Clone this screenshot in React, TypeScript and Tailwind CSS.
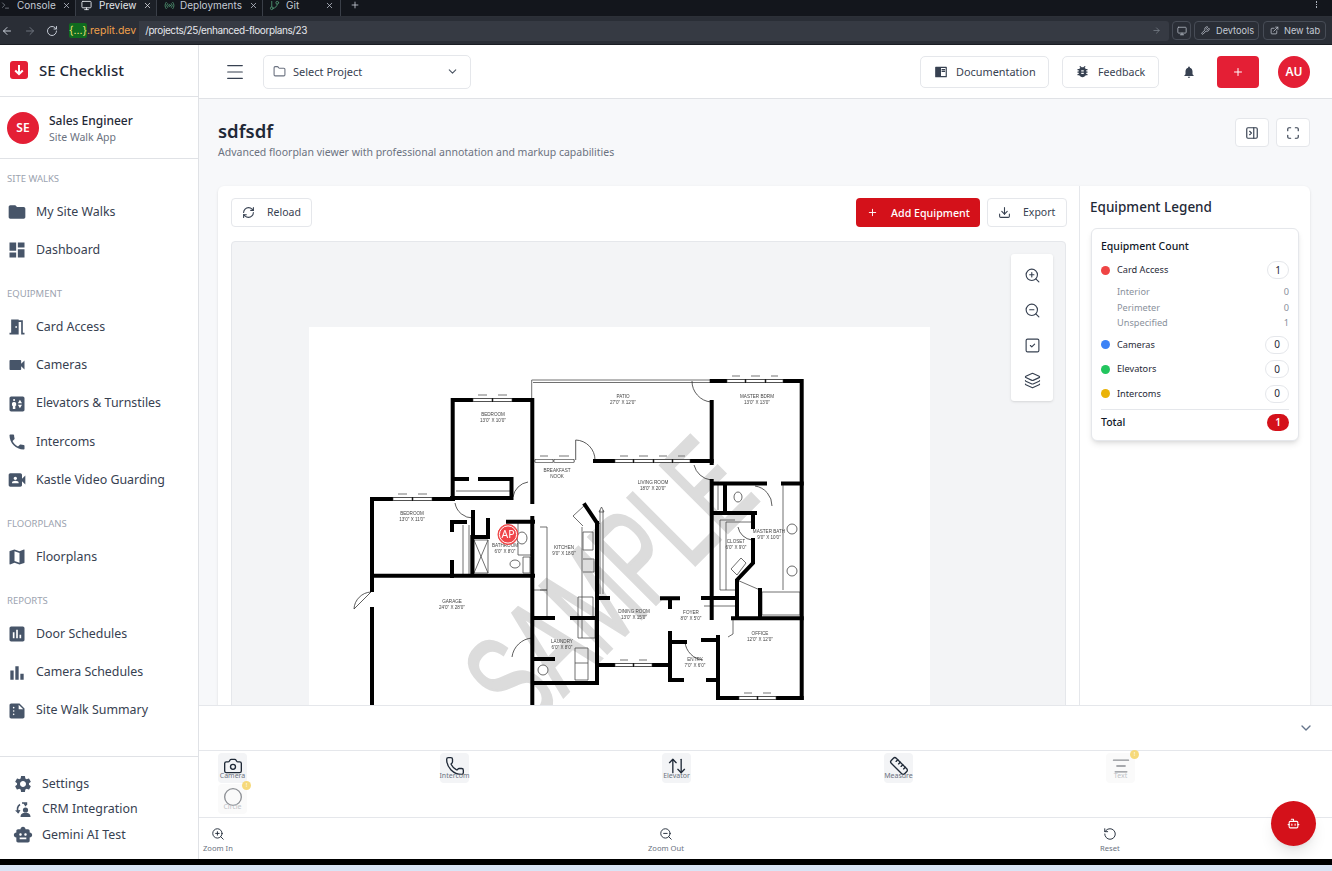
import React from "react";
import {
  AlignCenter,
  ArrowLeft,
  ArrowRight,
  ArrowUpDown,
  Bot,
  Camera,
  ChevronDown,
  Circle,
  Download,
  ExternalLink,
  Folder,
  GitBranch,
  Layers,
  Maximize,
  Menu,
  Monitor,
  PanelRightClose,
  Phone,
  Plus,
  Radio,
  RefreshCw,
  RotateCcw,
  RotateCw,
  Ruler,
  SquareCheck,
  Terminal,
  Wrench,
  X,
  ZoomIn,
  ZoomOut,
} from "lucide-react";
import {
  MdAssessment,
  MdBarChart,
  MdBugReport,
  MdDashboard,
  MdElevator,
  MdFolder,
  MdMap,
  MdMeetingRoom,
  MdNotifications,
  MdPhone,
  MdSettings,
  MdSmartToy,
  MdSummarize,
  MdVideoCameraFront,
  MdVideocam,
} from "react-icons/md";
import { RiBookReadFill } from "react-icons/ri";

function CrmIcon() {
  return (
    <svg width="20" height="18" viewBox="0 0 20 18" fill="none">
      <path d="M7 3.5C4.5 5 3.5 8.5 5.5 12" stroke="#475569" strokeWidth="1.6" />
      <path d="M2 9.5l3.5 3 2-3.5" fill="#475569" />
      <path d="M9 2h4.5v2M13 5l-2-3" stroke="#475569" strokeWidth="1.4" />
      <circle cx="12.5" cy="9" r="2.6" fill="#475569" />
      <path d="M7.5 16c0-3 2.2-4.3 5-4.3s5 1.3 5 4.3z" fill="#475569" />
    </svg>
  );
}

const navSections = [
  {
    title: "SITE WALKS",
    items: [
      ["My Site Walks", MdFolder],
      ["Dashboard", MdDashboard],
    ],
  },
  {
    title: "EQUIPMENT",
    items: [
      ["Card Access", MdMeetingRoom],
      ["Cameras", MdVideocam],
      ["Elevators & Turnstiles", MdElevator],
      ["Intercoms", MdPhone],
      ["Kastle Video Guarding", MdVideoCameraFront],
    ],
  },
  {
    title: "FLOORPLANS",
    items: [["Floorplans", MdMap]],
  },
  {
    title: "REPORTS",
    items: [
      ["Door Schedules", MdAssessment],
      ["Camera Schedules", MdBarChart],
      ["Site Walk Summary", MdSummarize],
    ],
  },
] as const;

function BrowserBar() {
  return (
    <div className="font-['Inter',sans-serif]">
      <div className="flex h-[17px] items-center overflow-hidden border-b border-[#2c3037] bg-[#13161c] text-[10px] text-[#c4cad4]">
        <div className="flex h-full w-[76px] items-center border-r border-[#3a3f48] pb-[6px] pl-[1px]">
          <Terminal size={9} className="text-[#8b919b]" />
          <span className="ml-[7px]">Console</span>
          <X size={9} className="ml-auto mr-[4px]" />
        </div>
        <div className="flex h-full w-[81px] items-center border-r border-[#3a3f48] bg-[#1c2027] pb-[6px] pl-[5px] text-[#e5e7eb]">
          <Monitor size={11} />
          <span className="ml-[7px]">Preview</span>
          <X size={9} className="ml-auto mr-[4px]" />
        </div>
        <div className="flex h-full w-[106px] items-center border-r border-[#3a3f48] pb-[6px] pl-[7px]">
          <Radio size={11} className="text-[#4d8f6f]" />
          <span className="ml-[5px]">Deployments</span>
          <X size={9} className="ml-auto mr-[4px]" />
        </div>
        <div className="flex h-full w-[78px] items-center border-r border-[#3a3f48] pb-[6px] pl-[6px]">
          <GitBranch size={11} className="text-[#4d8f6f]" />
          <span className="ml-[6px]">Git</span>
          <X size={9} className="ml-auto mr-[6px]" />
        </div>
        <Plus size={10} className="mb-[6px] ml-[9px]" />
        <div className="mb-[7px] ml-auto mr-[15px] flex flex-col gap-[1px]">
          <span className="h-[1.5px] w-[1.5px] bg-[#aeb4be]" />
          <span className="h-[1.5px] w-[1.5px] bg-[#aeb4be]" />
          <span className="h-[1.5px] w-[1.5px] bg-[#aeb4be]" />
        </div>
      </div>
      <div className="flex h-[27px] items-center bg-[#2a2e36] text-[10px]">
        <ArrowLeft size={12} className="ml-[1px] text-[#c4cad4]" />
        <ArrowRight size={12} className="ml-[11px] text-[#6d737d]" />
        <RotateCw size={12} className="ml-[10px] text-[#c4cad4]" />
        <div className="ml-[6px] flex h-[20px] flex-1 items-center rounded-[3px] bg-[#363a43]">
          <div className="flex h-full items-center bg-[#2a2e36] pl-[5px] pr-[3px] text-[10.5px]">
            <span className="rounded-[2px] bg-[#0f6b1f] text-[#f3e27a]">{"{...}"}</span>
            <span className="text-[#f0a04b]">.replit.dev</span>
          </div>
          <span className="ml-[6px] tracking-[-0.4px] text-[#e5e7eb]">/projects/25/enhanced-floorplans/23</span>
          <ArrowRight size={9} className="ml-auto mr-[8px] text-[#7b818b]" />
        </div>
        <div className="ml-[3px] flex h-[19px] w-[19px] items-center justify-center rounded-[4px] border border-[#474c56]">
          <Monitor size={10} className="text-[#aeb4be]" />
        </div>
        <div className="ml-[3px] flex h-[19px] w-[65px] items-center rounded-[4px] border border-[#474c56] pl-[6px] text-[9.2px] text-[#c4cad4]">
          <Wrench size={9} />
          <span className="ml-[6px]">Devtools</span>
        </div>
        <div className="ml-[4px] mr-[6px] flex h-[19px] w-[63px] items-center rounded-[4px] border border-[#474c56] pl-[6px] text-[9.2px] text-[#c4cad4]">
          <ExternalLink size={9} />
          <span className="ml-[5px]">New tab</span>
        </div>
      </div>
    </div>
  );
}

function Sidebar() {
  return (
    <aside className="flex w-[199px] shrink-0 flex-col border-r border-[#e0e2e6] bg-white">
      <div className="flex h-[52px] shrink-0 items-center border-b border-[#e0e2e6] pb-[1px] pl-[10px]">
        <div className="flex h-[18px] w-[18px] items-center justify-center rounded-[3px] bg-[#e41f35]">
          <svg width="12" height="12" viewBox="0 0 12 12" fill="none" stroke="white" strokeWidth="2">
            <path d="M6 1v9M2.2 6.4 6 10l3.8-3.6" />
          </svg>
        </div>
        <span className="ml-[11px] text-[15px] font-medium text-[#1f2937]">SE Checklist</span>
      </div>
      <div className="flex h-[62px] shrink-0 items-center border-b border-[#e0e2e6] pl-[7px] pt-[1px]">
        <div className="flex h-[32px] w-[32px] items-center justify-center rounded-full bg-[#e41f35] text-[12px] font-semibold text-white">
          SE
        </div>
        <div className="ml-[10px]">
          <div className="text-[12px] font-medium leading-[17px] text-[#1f2937]">Sales Engineer</div>
          <div className="text-[10.5px] leading-[16px] text-[#6b7280]">Site Walk App</div>
        </div>
      </div>
      <nav className="flex-1 pt-[12.8px]">
        {navSections.map((section) => (
          <div key={section.title} className="mb-[18px]">
            <div className="mb-[7px] h-[14px] pl-[7px] text-[9.5px] leading-[14px] text-[#9ca3af]">
              {section.title}
            </div>
            {section.items.map(([label, Icon]) => (
              <div key={label} className="flex h-[38.2px] items-center pl-[7px]">
                <Icon size={20} className="text-[#475569]" />
                <span className="ml-[9px] text-[12.4px] text-[#374151]">{label}</span>
              </div>
            ))}
          </div>
        ))}
      </nav>
      <div className="flex h-[103px] shrink-0 flex-col gap-[7.6px] border-t border-[#e0e2e6] pl-[13px] pt-[18px] text-[12.4px] text-[#374151]">
        <div className="flex h-[18px] items-center">
          <MdSettings size={20} className="text-[#475569]" />
          <span className="ml-[9px]">Settings</span>
        </div>
        <div className="flex h-[18px] items-center">
          <CrmIcon />
          <span className="ml-[9px]">CRM Integration</span>
        </div>
        <div className="flex h-[18px] items-center">
          <MdSmartToy size={20} className="text-[#475569]" />
          <span className="ml-[9px]">Gemini AI Test</span>
        </div>
      </div>
    </aside>
  );
}

function TopBar() {
  return (
    <header className="flex h-[54px] shrink-0 items-center border-b border-[#e0e2e6] bg-white pl-[25px] pr-[22px]">
      <Menu size={22} strokeWidth={1.2} className="text-[#374151]" />
      <div className="ml-[17px] flex h-[34px] w-[208px] items-center rounded-[5px] border border-[#e5e7eb] pl-[9px] pr-[11px] text-[11px] text-[#374151]">
        <Folder size={13} className="text-[#6b7280]" />
        <span className="ml-[7px] pt-[1px]">Select Project</span>
        <ChevronDown size={13} className="ml-auto text-[#4b5563]" />
      </div>
      <div className="ml-auto flex h-[32px] w-[129px] items-center rounded-[5px] border border-[#e5e7eb] pl-[13px] text-[10.9px] text-[#374151]">
        <RiBookReadFill size={14} className="text-[#374151]" />
        <span className="ml-[8px] pt-[1px]">Documentation</span>
      </div>
      <div className="ml-[13px] flex h-[32px] w-[97px] items-center rounded-[5px] border border-[#e5e7eb] pl-[12px] text-[10.6px] text-[#374151]">
        <MdBugReport size={15} className="text-[#374151]" />
        <span className="ml-[8px] pt-[2px]">Feedback</span>
      </div>
      <MdNotifications size={14} className="ml-[23px] text-[#374151]" />
      <div className="ml-[21px] flex h-[32px] w-[42px] items-center justify-center rounded-[4px] bg-[#e41f35]">
        <Plus size={12} strokeWidth={2} className="text-white" />
      </div>
      <div className="ml-[19px] flex h-[32px] w-[32px] items-center justify-center rounded-full bg-[#e41f35] text-[12px] font-semibold text-white">
        AU
      </div>
    </header>
  );
}

const thickWalls = [
  "M452.7 400H532.3M452.7 400V498M532.3 400V502",
  "M453 479H467M480 479H511.5V498M452 498H511.5",
  "M372 499H453M372 499V590M372 609V705M372 575.7H533",
  "M452 522V530M452 562V576M452 522H465M508 521.7H533M473 512V537M488 520V537M473 537H488M472.3 537V575",
  "M532.3 518V705M533 618H553M533 659H553M533 683H597",
  "M595 461H711.7",
  "M711.7 381H801.7M801.7 381V698M711.7 402V463",
  "M711.7 483.5H765M783 483.5H801.7M725 484V510M711.7 513H755M711.7 481V618",
  "M753 513V527M753 540V563L737 580V618M760 590V618M733 618.3H801.7",
  "M703 598H737M718 637V698H801.7",
  "M670 633V680M670 642H685M703 640H718M670 680H682M708 680H718",
  "M598 665H670M670 600V607M662 598.3H678M598 598H608M597 523V683",
  "M597 523L585 505M572 618H595",
];

const thinLines = [
  "M531.7 461V380H711.7",
  "M533 382.5H710",
  "M533 461H575",
  "M456 491H510",
  "M463 525V576M469 525V576",
  "M474 540H488V573H474ZM474 540L488 573M488 540L474 573",
  "M518 523V555H533M523 557H530V573H523Z",
  "M540 527H547V590H540M534 590H547V617H534",
  "M718 485V510",
  "M720 520H735M720 520V590H735",
  "M737 580L760 590",
  "M762 592H800V615H762Z",
  "M600 510V594M603 510V594M601.5 507L599 512H604Z",
  "M585 505L573 516L583 526M582 527V638",
  "M583 532H593V550H583ZM583 559H594V572H583",
  "M578 597H593V617H578ZM578 618H595V638H578Z",
  "M575 648H588V680H575ZM575 663H588",
  "M704 606H737",
  "M726 522H752M726 522V590",
  "M733 618V634L728 637",
  "M746 563L737 575L731 569L741 558Z",
  "M783 484V590",
];

const doorArcs = [
  "M354 609L371 592M354 609A18 18 0 0 1 371 592",
  "M455 503A18 18 0 0 0 473 518",
  "M513 497A18 18 0 0 1 528 482",
  "M512 657A22 22 0 0 1 532 638",
  "M575.7 460V440A20 20 0 0 1 595 460",
  "M692 381A21 21 0 0 0 711 402",
  "M694 465A20 20 0 0 0 711 480",
  "M755 486A20 20 0 0 1 772 506",
  "M738 527A16 16 0 0 0 752 540",
  "M685 642A20 20 0 0 0 703 660",
];

const roomLabels: [string, string, number, number][] = [
  ["BEDROOM", "13'0\" X 10'0\"", 493, 416],
  ["BEDROOM", "13'0\" X 11'0\"", 412, 515],
  ["BATHROOM", "6'0\" X 8'0\"", 505, 547],
  ["GARAGE", "24'0\" X 28'0\"", 452, 603],
  ["KITCHEN", "9'0\" X 18'0\"", 564, 549],
  ["LAUNDRY", "6'0\" X 8'0\"", 562, 643],
  ["BREAKFAST", "NOOK", 557, 472],
  ["PATIO", "27'0\" X 12'0\"", 623, 398],
  ["MASTER BDRM", "13'0\" X 13'0\"", 757, 398],
  ["LIVING ROOM", "18'0\" X 20'0\"", 653, 484],
  ["MASTER BATH", "9'0\" X 10'0\"", 769, 533],
  ["CLOSET", "6'0\" X 9'0\"", 736, 543],
  ["DINING ROOM", "13'0\" X 15'0\"", 634, 613],
  ["FOYER", "8'0\" X 5'0\"", 691, 614],
  ["ENTRY", "7'0\" X 6'0\"", 695, 661],
  ["OFFICE", "12'0\" X 12'0\"", 760, 635],
];

const windows = [
  [473, 492, 398.5],
  [493, 512, 398.5],
  [393, 412, 497.5],
  [413, 432, 497.5],
  [727, 745, 379.5],
  [746, 765, 379.5],
  [766, 783, 379.5],
  [535, 553, 459.5],
  [554, 574, 459.5],
  [615, 633, 459.5],
  [634, 653, 459.5],
  [654, 672, 459.5],
  [673, 690, 459.5],
  [615, 633, 663.5],
  [634, 652, 663.5],
  [739, 757, 696.5],
  [758, 776, 696.5],
];

function FloorplanDrawing() {
  return (
    <svg viewBox="309 327 621 378" width="621" height="378" className="block bg-white" style={{ filter: "blur(0.35px)" }}>
      <text
        transform="translate(524 736) rotate(-45) scale(0.6 1)"
        fontFamily="Liberation Sans, sans-serif"
        fontSize="138"
        fill="#dcdcdc"
        stroke="#dcdcdc"
        strokeWidth="3"
      >
        SAMPLE
      </text>
      {thinLines.map((d) => (
        <path key={d} d={d} fill="none" stroke="#4b4b4b" strokeWidth="0.8" />
      ))}
      {doorArcs.map((d) => (
        <path key={d} d={d} fill="none" stroke="#333" strokeWidth="0.8" />
      ))}
      {thickWalls.map((d) => (
        <path key={d} d={d} fill="none" stroke="#000" strokeWidth="4" strokeLinecap="square" />
      ))}
      {windows.map(([x1, x2, y]) => (
        <g key={`${x1}-${y}`}>
          <rect x={x1} y={y} width={x2 - x1} height="3" fill="white" stroke="#333" strokeWidth="0.6" />
          <rect x={x1 + 5} y={y - 4} width={x2 - x1 - 10} height="1" fill="#777" />
        </g>
      ))}
      <ellipse cx="515" cy="564" rx="5" ry="4" fill="white" stroke="#444" strokeWidth="0.8" />
      <ellipse cx="522" cy="538" rx="5" ry="6" fill="white" stroke="#444" strokeWidth="0.8" />
      <circle cx="543" cy="670" r="5" fill="white" stroke="#444" strokeWidth="0.8" />
      <circle cx="792" cy="529" r="5" fill="white" stroke="#444" strokeWidth="0.8" />
      <circle cx="792" cy="571" r="5" fill="white" stroke="#444" strokeWidth="0.8" />
      <ellipse cx="738" cy="497" rx="4" ry="5" fill="white" stroke="#444" strokeWidth="0.8" />
      {roomLabels.map(([name, size, x, y]) => (
        <text key={`${name}-${x}`} x={x} y={y} textAnchor="middle" fontFamily="Liberation Sans, sans-serif" fontSize="4.6" fill="#444">
          {name}
          <tspan x={x} dy="6">
            {size}
          </tspan>
        </text>
      ))}
      <circle cx="508" cy="534.5" r="10" fill="#ef4444" stroke="#ef4444" strokeWidth="1" />
      <circle cx="508" cy="534.5" r="8.6" fill="#f0454a" stroke="#ffffff" strokeWidth="1" />
      <text x="508" y="538.2" textAnchor="middle" fontFamily="Noto Sans, sans-serif" fontSize="10.5" fill="white">
        AP
      </text>
    </svg>
  );
}

const legendRows = [
  ["Cameras", "bg-[#3b82f6]"],
  ["Elevators", "bg-[#22c55e]"],
  ["Intercoms", "bg-[#eab308]"],
];

function Legend() {
  return (
    <div className="w-[231px] shrink-0 border-l border-[#e5e7eb] pl-[10px] pr-[10px] pt-[13px]">
      <div className="text-[13.5px] font-medium leading-[17px] text-[#1f2937]">Equipment Legend</div>
      <div className="ml-[1px] mt-[12px] h-[213px] w-[208px] rounded-[6px] border border-[#e5e7eb] bg-white pl-[9px] pr-[9px] pt-[10px] shadow-md">
        <div className="text-[10.5px] font-medium leading-[15px] text-[#111827]">Equipment Count</div>
        <div className="mt-[7px] flex h-[18px] items-center text-[9.2px] text-[#1f2937]">
          <span className="h-[9px] w-[9px] rounded-full bg-[#ef4444]" />
          <span className="ml-[7px]">Card Access</span>
          <span className="ml-auto flex h-[18px] w-[22px] items-center justify-center rounded-full border border-[#e5e7eb] text-[10px]">1</span>
        </div>
        <div className="mt-[5px] pl-[16px] text-[9.2px] leading-[15.5px] text-[#8a919c]">
          <div className="flex justify-between"><span>Interior</span><span>0</span></div>
          <div className="flex justify-between"><span>Perimeter</span><span>0</span></div>
          <div className="flex justify-between"><span>Unspecified</span><span>1</span></div>
        </div>
        <div className="mt-[5px] flex flex-col gap-[6.5px]">
          {legendRows.map(([label, dot]) => (
            <div key={label} className="flex h-[18px] items-center text-[9.2px] text-[#1f2937]">
              <span className={`h-[9px] w-[9px] rounded-full ${dot}`} />
              <span className="ml-[7px]">{label}</span>
              <span className="ml-auto flex h-[18px] w-[24px] items-center justify-center rounded-full border border-[#e5e7eb] text-[10px]">0</span>
            </div>
          ))}
        </div>
        <div className="mt-[6.5px] flex h-[26px] items-center border-t border-[#e5e7eb] text-[10.5px] font-medium text-[#111827]">
          <span>Total</span>
          <span className="ml-auto flex h-[17px] w-[22px] items-center justify-center rounded-full bg-[#d4111a] text-[10px] font-semibold text-white">1</span>
        </div>
      </div>
    </div>
  );
}

const toolButtons = [
  ["Camera", Camera, false],
  ["Intercom", Phone, false],
  ["Elevator", ArrowUpDown, false],
  ["Measure", Ruler, false],
  ["Text", AlignCenter, true],
  ["Circle", Circle, true],
] as const;

function Tools() {
  return (
    <div className="grid h-[67px] shrink-0 grid-cols-[222px_222px_222px_222px_1fr] content-start gap-y-[1px] border-b border-[#e5e7eb] pl-[19px] pt-[2px]">
      {toolButtons.map(([label, Icon, soon]) => (
        <div
          key={label}
          className={`relative flex h-[30px] w-[29px] flex-col items-center rounded-[4px] pt-[3px] ${soon ? "bg-[#fafafa]" : "bg-[#f3f4f6]"}`}
        >
          <Icon size={20} strokeWidth={1.6} className={soon ? "text-[#8c8f94]" : "text-[#1f2937]"} />
          <span className={`-mt-[5px] text-[7px] leading-[9px] ${soon ? "text-[#c0c2c6]" : "text-[#6b7280]"}`}>{label}</span>
          {soon && (
            <span className="absolute -right-[4px] -top-[3px] flex h-[9px] w-[9px] items-center justify-center rounded-full bg-[#f6d97a] text-[6px] text-white">
              !
            </span>
          )}
        </div>
      ))}
    </div>
  );
}

function ZoomBar() {
  const items = [
    ["Zoom In", ZoomIn],
    ["Zoom Out", ZoomOut],
    ["Reset", RotateCcw],
  ] as const;
  return (
    <div className="grid h-[41px] shrink-0 grid-cols-[445px_452px_1fr] pl-[4px] pt-[9px]">
      {items.map(([label, Icon]) => (
        <div key={label} className="flex w-fit flex-col items-center">
          <Icon size={14} strokeWidth={1.6} className="text-[#1f2937]" />
          <span className="mt-[2px] text-[7.6px] leading-[11px] text-[#6b7280]">{label}</span>
        </div>
      ))}
    </div>
  );
}

function Workspace() {
  return (
    <div className="min-h-0 flex-1 overflow-hidden bg-[#f7f8fa] pl-[19px] pr-[22px]">
      <div className="flex h-[87px] items-start justify-between pt-[19px]">
        <div className="pt-[1px]">
          <h1 className="text-[18.5px] font-semibold leading-[24px] text-[#1f2937]">sdfsdf</h1>
          <p className="mt-[1px] text-[10.5px] leading-[16px] text-[#6b7280]">
            Advanced floorplan viewer with professional annotation and markup capabilities
          </p>
        </div>
        <div className="flex gap-[7px]">
          <div className="flex h-[29px] w-[34px] items-center justify-center rounded-[4px] border border-[#e5e7eb] bg-white">
            <PanelRightClose size={14} className="text-[#374151]" />
          </div>
          <div className="flex h-[29px] w-[34px] items-center justify-center rounded-[4px] border border-[#e5e7eb] bg-white">
            <Maximize size={14} className="text-[#374151]" />
          </div>
        </div>
      </div>
      <div className="flex h-[560px] rounded-[6px] bg-white shadow-sm">
        <div className="min-w-0 flex-1 pl-[13px] pr-[12px] pt-[12px]">
          <div className="flex h-[29px] items-center">
            <div className="flex h-full w-[81px] items-center rounded-[4px] border border-[#e5e7eb] pl-[10px] text-[10.5px] text-[#374151]">
              <RefreshCw size={13} />
              <span className="ml-[12px] pt-[1px]">Reload</span>
            </div>
            <div className="ml-auto flex h-full w-[124px] items-center rounded-[4px] bg-[#d4111a] pl-[11px] text-[10.7px] font-medium text-white">
              <Plus size={11} />
              <span className="ml-[13px] pt-[1px]">Add Equipment</span>
            </div>
            <div className="ml-[7px] flex h-full w-[80px] items-center rounded-[4px] border border-[#e5e7eb] pl-[10px] text-[10.5px] text-[#374151]">
              <Download size={13} />
              <span className="ml-[12px] pt-[1px]">Export</span>
            </div>
          </div>
          <div className="relative mt-[14px] h-[600px] w-[835px] rounded-[4px] border border-[#e5e7eb] bg-[#f3f4f6] pl-[77px] pt-[85px]">
            <FloorplanDrawing />
            <div className="absolute right-[12px] top-[12px] flex h-[147px] w-[42px] flex-col items-center gap-[18px] rounded-[3px] bg-white pt-[13px] shadow-sm">
              <ZoomIn size={17} strokeWidth={1.6} className="text-[#374151]" />
              <ZoomOut size={17} strokeWidth={1.6} className="text-[#374151]" />
              <SquareCheck size={17} strokeWidth={1.6} className="text-[#374151]" />
              <Layers size={17} strokeWidth={1.6} className="text-[#374151]" />
            </div>
          </div>
        </div>
        <Legend />
      </div>
    </div>
  );
}

export default function App() {
  return (
    <div className="relative flex h-[871px] w-[1332px] flex-col overflow-hidden bg-[#d9e4f5] font-['Noto_Sans',sans-serif]">
      <BrowserBar />
      <div className="flex h-[815px] shrink-0 overflow-hidden border-t border-[#1a1d23] bg-white">
        <Sidebar />
        <main className="flex min-w-0 flex-1 flex-col">
          <TopBar />
          <Workspace />
          <div className="flex h-[46px] shrink-0 items-center justify-end border-y border-[#e5e7eb] bg-white pr-[18px]">
            <ChevronDown size={16} className="text-[#64748b]" />
          </div>
          <Tools />
          <ZoomBar />
        </main>
      </div>
      <div className="h-[6px] shrink-0 bg-black" />
      <div className="absolute left-[1271px] top-[801px] flex h-[45px] w-[45px] items-center justify-center rounded-full bg-[#d4111a] shadow-lg">
        <Bot size={13} className="text-white" />
      </div>
    </div>
  );
}
